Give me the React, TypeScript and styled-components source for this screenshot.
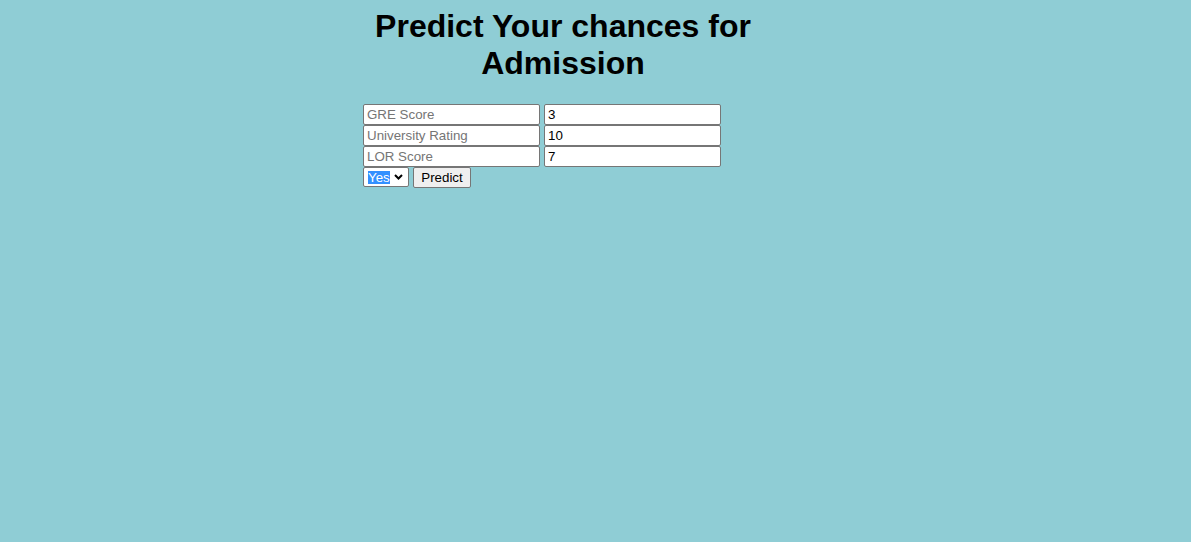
import React from "react";
import styled, { createGlobalStyle } from "styled-components";

const Global = createGlobalStyle`
  html, body { margin: 0; padding: 0; }
  body {
    background: #8fcdd5;
    font-family: "Liberation Sans", Arial, sans-serif;
    min-height: 542px;
  }
`;

const Page = styled.div`
  padding-top: 8px;
  padding-left: 363px;
`;

const Panel = styled.div`
  width: 400px;
  display: flex;
  flex-direction: column;
`;

const Title = styled.h1`
  margin: 0 0 22px;
  font-size: 32px;
  font-weight: bold;
  text-align: center;
  color: #000;
  line-height: 36.8px;
`;

const Form = styled.form`
  display: flex;
  flex-direction: column;
  margin: 0;
`;

const Row = styled.div`
  display: flex;
  gap: 4px;
  align-items: flex-start;
`;

const Field = styled.input`
  box-sizing: border-box;
  width: 177px;
  height: 21px;
  margin: 0;
  padding: 1px 3px;
  border: 1px solid #767676;
  border-radius: 2px;
  background: #fff;
  font-family: "Liberation Sans", Arial, sans-serif;
  font-size: 13.33px;
  color: #000;
  outline: none;
  &::placeholder { color: #757575; opacity: 1; }
`;

const SelectBox = styled.div`
  box-sizing: border-box;
  width: 46px;
  height: 20px;
  border: 1px solid #767676;
  border-radius: 2px;
  background: #fff;
  display: flex;
  align-items: center;
  gap: 4px;
  padding: 1px 0 0 4px;
  font-size: 13.33px;
  color: #000;
`;

const Highlight = styled.span`
  display: block;
  height: 13px;
  line-height: 13px;
  background: #3390ff;
  color: #fff;
`;

const Chevron = styled.svg`
  width: 9px;
  height: 6px;
  display: block;
`;

const Button = styled.button`
  box-sizing: border-box;
  height: 21px;
  width: 58px;
  margin: 0;
  padding: 0 6px;
  border: 1px solid #767676;
  border-radius: 2px;
  background: #efefef;
  font-family: "Liberation Sans", Arial, sans-serif;
  font-size: 13.33px;
  color: #000;
`;

export default function App() {
  return (
    <>
      <Global />
      <Page>
        <Panel>
          <Title>Predict Your chances for Admission</Title>
          <Form onSubmit={(e) => e.preventDefault()}>
            <Row>
              <Field placeholder="GRE Score" />
              <Field defaultValue="3" />
            </Row>
            <Row>
              <Field placeholder="University Rating" />
              <Field defaultValue="10" />
            </Row>
            <Row>
              <Field placeholder="LOR Score" />
              <Field defaultValue="7" />
            </Row>
            <Row>
              <SelectBox>
                <Highlight>Yes</Highlight>
                <Chevron viewBox="0 0 9 6">
                  <path d="M1 1 L4.5 4.5 L8 1" fill="none" stroke="#000" strokeWidth="2" />
                </Chevron>
              </SelectBox>
              <Button type="submit">Predict</Button>
            </Row>
          </Form>
        </Panel>
      </Page>
    </>
  );
}
